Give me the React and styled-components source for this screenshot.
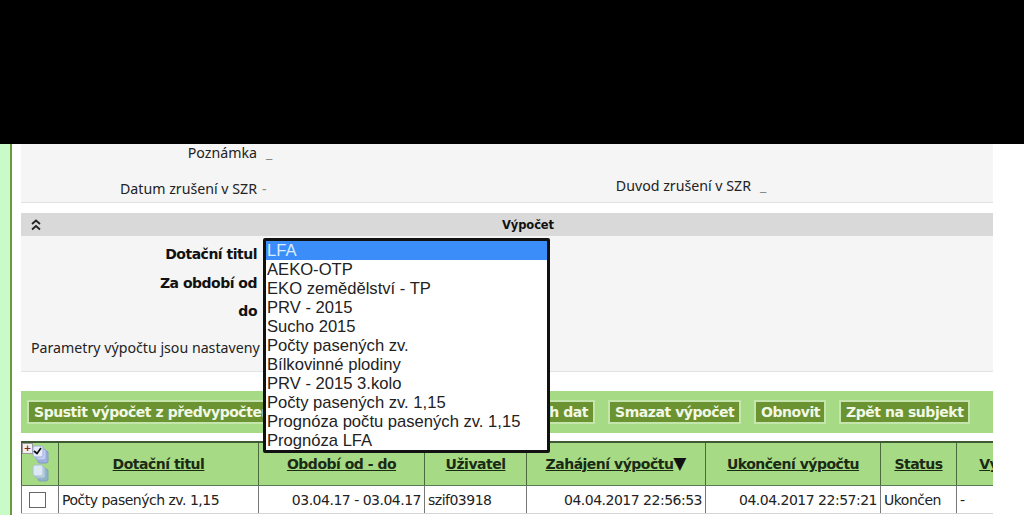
import React from 'react';
import styled, { createGlobalStyle } from 'styled-components';

const GlobalStyle = createGlobalStyle`
  html, body {
    margin: 0;
    padding: 0;
    background: #fff;
  }
  body {
    font-family: "DejaVu Sans", Verdana, sans-serif;
    color: #222;
  }
`;

const options = [
  'LFA',
  'AEKO-OTP',
  'EKO zemědělství - TP',
  'PRV - 2015',
  'Sucho 2015',
  'Počty pasených zv.',
  'Bílkovinné plodiny',
  'PRV - 2015 3.kolo',
  'Počty pasených zv. 1,15',
  'Prognóza počtu pasených zv. 1,15',
  'Prognóza LFA',
];

const buttons = [
  { label: 'Spustit výpočet z předvypočtených dat', width: 300, left: true },
  { label: 'Spustit výpočet z aktuálních dat', width: 255, right: true },
  { label: 'Smazat výpočet', width: 133 },
  { label: 'Obnovit', width: 72 },
  { label: 'Zpět na subjekt', width: 131 },
];

const columns = [
  { label: 'Dotační titul', width: 200, value: 'Počty pasených zv. 1,15', align: 'left' },
  { label: 'Období od - do', width: 166, value: '03.04.17 - 03.04.17', align: 'right' },
  { label: 'Uživatel', width: 102, value: 'szif03918', align: 'left' },
  { label: 'Zahájení výpočtu', width: 179, value: '04.04.2017 22:56:53', align: 'right', sorted: true },
  { label: 'Ukončení výpočtu', width: 175, value: '04.04.2017 22:57:21', align: 'right' },
  { label: 'Status', width: 76, value: 'Ukončen', align: 'left' },
  { label: 'Vypočet', width: 106, value: '-', align: 'left' },
];

const Page = styled.div`
  position: relative;
  width: 1024px;
  height: 530px;
  overflow: hidden;
`;

const TopBar = styled.div`
  height: 144px;
  background: #000;
`;

const Body = styled.div`
  display: flex;
  height: 371px;
`;

const SideStrip = styled.div`
  width: 10px;
  background: #c9fbc9;
  border-right: 2px solid #6f9a3c;
`;

const Main = styled.div`
  width: 972px;
  margin-left: 9px;
  display: flex;
  flex-direction: column;
  overflow: hidden;
`;

const InfoPanel = styled.section`
  flex-shrink: 0;
  height: 58px;
  background: #f5f5f5;
  border-bottom: 1px solid #e2e2e2;
  display: grid;
  grid-template-columns: 236px 358px 136px 1fr;
  grid-template-rows: 16px 42px;
  font-size: 14.2px;
  font-family: "Noto Sans", sans-serif;
  color: #222;
`;

const InfoLabel = styled.div`
  text-align: right;
  align-self: ${(p) => (p.$low ? 'end' : 'center')};
  padding-bottom: ${(p) => p.$low || 0}px;
  white-space: nowrap;
`;

const InfoValue = styled(InfoLabel)`
  text-align: left;
  padding-left: ${(p) => p.$indent || 5}px;
  color: #888;
`;

const CalcPanel = styled.section`
  flex-shrink: 0;
  margin-top: 10px;
  background: #f5f5f5;
  border-bottom: 1px solid #e2e2e2;
  height: 158px;
`;

const CalcHeader = styled.div`
  position: relative;
  height: 23px;
  background: #d9d9d9;
  display: flex;
  align-items: center;
  justify-content: center;
  font-size: 11.5px;
  font-weight: bold;
  color: #111;
  padding-left: 42px;
  letter-spacing: -0.1px;
`;

const Collapse = styled.svg`
  position: absolute;
  left: 10px;
  top: 6px;
`;

const CalcBody = styled.div`
  padding-top: 4px;
`;

const FieldRow = styled.div`
  height: 28.5px;
  width: 236px;
  display: flex;
  align-items: center;
  justify-content: flex-end;
  font-size: 14px;
  font-weight: bold;
  letter-spacing: -0.5px;
  color: #111;
  white-space: nowrap;
`;

const ParamRow = styled.div`
  margin-top: 10px;
  padding-left: 10px;
  height: 24px;
  display: flex;
  align-items: center;
  font-size: 14.2px;
  font-family: "Noto Sans", sans-serif;
  white-space: nowrap;
`;

const ActionBar = styled.div`
  flex-shrink: 0;
  margin-top: 19px;
  height: 42px;
  background: #a6da84;
  display: flex;
  align-items: center;
  gap: 13px;
  padding-left: 6px;
`;

const ActionButton = styled.button`
  box-sizing: border-box;
  height: 24px;
  width: ${(p) => p.$width}px;
  padding: 0 5px;
  background: #6b9331;
  border: 2px solid #c4e5ab;
  color: #f2f8e6;
  font-family: "DejaVu Sans", sans-serif;
  font-size: 14px;
  font-weight: bold;
  letter-spacing: -0.45px;
  text-align: ${(p) => p.$align};
  white-space: nowrap;
  overflow: hidden;
`;

const TableWrap = styled.div`
  margin-top: 8px;
  overflow: hidden;
  flex-shrink: 0;
`;

const Table = styled.table`
  border-collapse: collapse;
  table-layout: fixed;
  width: 1041px;
`;

const HeadCell = styled.th`
  height: 42px;
  padding: 0;
  background: #a6da84;
  border: 1px solid #4c6b3c;
  border-top: 2px solid #3e5a34;
  border-bottom: 1px solid #5a7a50;
  font-size: 14px;
  font-weight: bold;
  letter-spacing: -0.5px;
  text-align: center;
  color: #1b2a14;
  position: relative;
  white-space: nowrap;
`;

const SortLink = styled.span`
  text-decoration: underline;
`;

const SortArrow = styled.span`
  font-size: 17px;
  letter-spacing: 0;
  line-height: 14px;
  color: #111;
`;

const Cell = styled.td`
  height: 27px;
  padding: 0 3px;
  background: #fff;
  border-left: 1px solid #777;
  border-right: 1px solid #777;
  border-bottom: 1px solid #d4d4d4;
  font-size: 14px;
  letter-spacing: -0.5px;
  text-align: ${(p) => p.$align};
  white-space: nowrap;
  overflow: hidden;
  color: #222;
`;

const CheckBox = styled.span`
  display: block;
  box-sizing: border-box;
  width: 17px;
  height: 16px;
  margin-left: 4px;
  border: 1px solid #666;
  background: #fff;
`;

const Plus = styled.span`
  position: absolute;
  left: 0;
  top: 0;
  width: 9px;
  height: 9px;
  line-height: 8px;
  background: #f4eeee;
  border: 1px solid #999;
  color: #822;
  font-size: 9px;
  font-weight: bold;
  letter-spacing: 0;
`;

const SelectIcons = styled.svg`
  position: absolute;
  left: 9px;
  top: 0;
`;

const Dropdown = styled.ul`
  position: absolute;
  left: 263px;
  top: 238px;
  box-sizing: border-box;
  width: 287px;
  height: 215px;
  margin: 0;
  padding: 0;
  list-style: none;
  background: #fff;
  border: 3px solid #111;
  border-radius: 2px;
  font-family: "Liberation Sans", Arial, sans-serif;
  font-size: 16.6px;
  color: #222;
`;

const Option = styled.li`
  height: 19px;
  line-height: 19px;
  padding-left: 1px;
  background: ${(p) => (p.$active ? '#3b8dfa' : 'transparent')};
  color: ${(p) => (p.$active ? '#dcecff' : 'inherit')};
  white-space: nowrap;
`;

const App = () => {
  return (
    <Page>
      <GlobalStyle />
      <TopBar />
      <Body>
        <SideStrip />
        <Main>
          <InfoPanel>
            <InfoLabel>Poznámka</InfoLabel>
            <InfoValue $indent={9}>_</InfoValue>
            <span />
            <span />
            <InfoLabel $low={4}>Datum zrušení v SZR</InfoLabel>
            <InfoValue $low={4}>-</InfoValue>
            <InfoLabel $low={7}>Duvod zrušení v SZR</InfoLabel>
            <InfoValue $low={7} $indent={9}>_</InfoValue>
          </InfoPanel>

          <CalcPanel>
            <CalcHeader>
              <Collapse width="10" height="12" viewBox="0 0 10 12">
                <path d="M1 5 L5 1.5 L9 5 M1 10.5 L5 7 L9 10.5" fill="none" stroke="#222" strokeWidth="1.8" />
              </Collapse>
              Výpočet
            </CalcHeader>
            <CalcBody>
              <FieldRow>Dotační titul</FieldRow>
              <FieldRow>Za období od</FieldRow>
              <FieldRow>do</FieldRow>
              <ParamRow>Parametry výpočtu jsou nastaveny</ParamRow>
            </CalcBody>
          </CalcPanel>

          <ActionBar>
            {buttons.map((b) => (
              <ActionButton
                key={b.label}
                $width={b.width}
                $align={b.left ? 'left' : b.right ? 'right' : 'center'}
              >
                {b.label}
              </ActionButton>
            ))}
          </ActionBar>

          <TableWrap>
            <Table>
              <colgroup>
                <col style={{ width: 37 }} />
                {columns.map((c) => <col key={c.label} style={{ width: c.width }} />)}
              </colgroup>
              <thead>
                <tr>
                  <HeadCell>
                    <Plus>+</Plus>
                    <SelectIcons width="28" height="43" viewBox="0 0 28 43">
                      <rect x="7" y="8" width="10" height="12" rx="2" fill="#9fb2e0" stroke="#8396cc" />
                      <rect x="5" y="6" width="10" height="11" rx="2" fill="#c3cff0" stroke="#93a6d6" />
                      <rect x="2" y="3" width="10" height="11" rx="2" fill="#e8ecfa" stroke="#a0b0dc" />
                      <path d="M3 8 L6 10.5 L10 5" fill="none" stroke="#111" strokeWidth="1.7" />
                      <rect x="7" y="26" width="10" height="12" rx="2" fill="#8fb4c8" stroke="#7fa3b8" />
                      <rect x="4" y="24" width="10" height="11" rx="2" fill="#bcd4e6" stroke="#9db6c8" />
                      <rect x="2" y="22" width="10" height="11" rx="2" fill="#dce8f4" stroke="#a9c0d2" />
                    </SelectIcons>
                  </HeadCell>
                  {columns.map((c) => (
                    <HeadCell key={c.label}>
                      <SortLink>{c.label}</SortLink>
                      {c.sorted && <SortArrow>▼</SortArrow>}
                    </HeadCell>
                  ))}
                </tr>
              </thead>
              <tbody>
                <tr>
                  <Cell $align="left"><CheckBox /></Cell>
                  {columns.map((c) => (
                    <Cell key={c.label} $align={c.align}>{c.value}</Cell>
                  ))}
                </tr>
              </tbody>
            </Table>
          </TableWrap>
        </Main>
      </Body>

      <Dropdown>
        {options.map((o, i) => (
          <Option key={o} $active={i === 0}>{o}</Option>
        ))}
      </Dropdown>
    </Page>
  );
};

export default App;
